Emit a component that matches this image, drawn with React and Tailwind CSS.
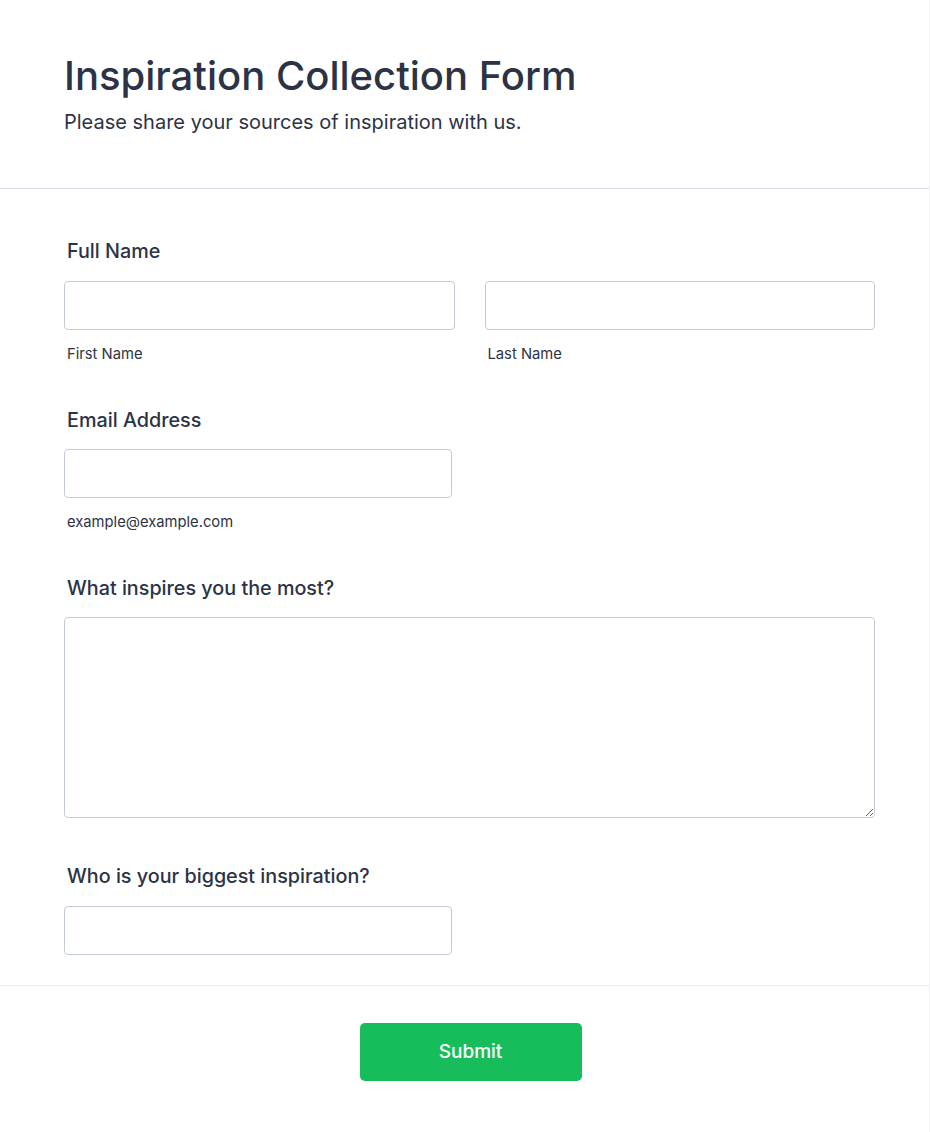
import React from "react";

const font = { fontFamily: "Inter, 'Noto Sans', sans-serif" };

function Label({ children, className = "" }) {
  return (
    <div className={`pl-[3px] text-[19.75px] leading-[28px] font-medium text-[#2c3345] ${className}`}>
      {children}
    </div>
  );
}

function Sub({ children }) {
  return (
    <div className="pl-[3px] mt-[14px] text-[14.75px] leading-[20px] text-[#2c3345]">{children}</div>
  );
}

const inputCls =
  "block w-full h-[49px] rounded-[4px] border border-[#c3cad8] bg-white px-3 text-[16px] text-[#2c3345] outline-none";

export default function App() {
  return (
    <div className="w-[930px] min-h-[1132px] bg-white border-r border-b border-[#f2f2f4]" style={font}>
      <header className="px-16 pt-[52px] pb-[52px] border-b border-[#d8d8ea]">
        <h1 className="text-[40px] leading-[48px] font-medium text-[#2c3345]">
          Inspiration Collection Form
        </h1>
        <p className="mt-2 text-[20px] leading-[28px] text-[#2c3345]">
          Please share your sources of inspiration with us.
        </p>
      </header>

      <main className="pl-16 pr-[54px] pt-[48px] pb-[30px]">
        <Label>Full Name</Label>
        <div className="mt-[16px] grid grid-cols-2 gap-[30px]">
          <div>
            <input className={inputCls} />
            <Sub>First Name</Sub>
          </div>
          <div>
            <input className={inputCls} />
            <Sub>Last Name</Sub>
          </div>
        </div>

        <Label className="mt-[42px]">Email Address</Label>
        <div className="mt-[15px] w-[388px]">
          <input className={inputCls} />
          <Sub>example@example.com</Sub>
        </div>

        <Label className="mt-[42px]">What inspires you the most?</Label>
        <textarea className="mt-[15px] block w-full h-[201px] rounded-[4px] border border-[#c3cad8] bg-white px-3 py-2 text-[16px] outline-none" />

        <Label className="mt-[44px]">Who is your biggest inspiration?</Label>
        <div className="mt-[16px] w-[388px]">
          <input className={inputCls} />
        </div>
      </main>

      <footer className="border-t border-[#eaeaf0] pt-[37px] pb-[51px] pl-[12px] flex justify-center">
        <button className="w-[222px] h-[58px] rounded-[5px] bg-[#18bd5b] text-white text-[19px] font-medium">
          Submit
        </button>
      </footer>
    </div>
  );
}
